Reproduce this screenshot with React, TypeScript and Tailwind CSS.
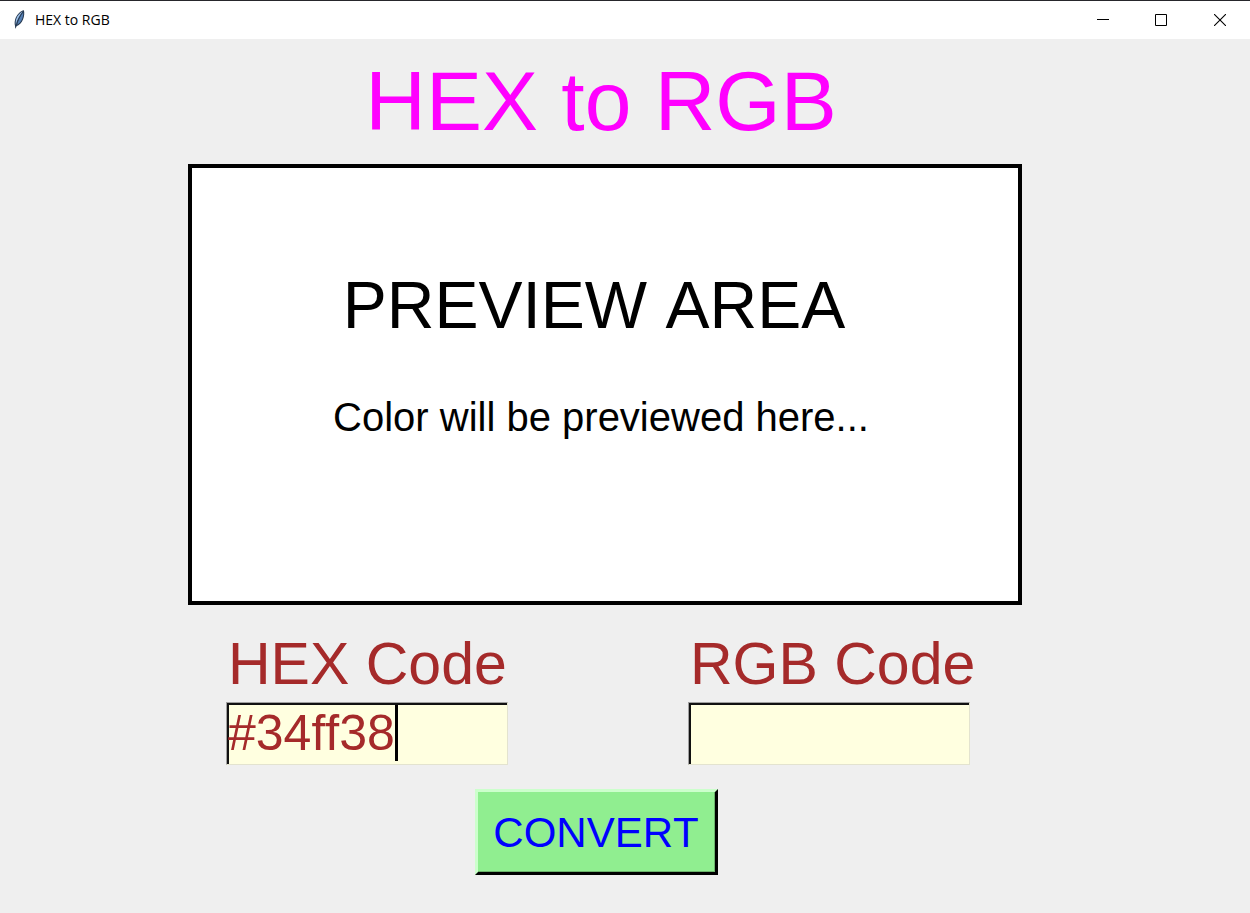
import { useState } from "react";

function FeatherIcon() {
  return (
    <svg viewBox="0 0 16 22" className="h-[22px] w-4" aria-hidden="true">
      <path d="M11.900 1.200C8.600 1.800 4.600 5.400 3.200 10.200c-.7 2.400-.7 4.800-.2 6.600l.3 3.200 1.100-2.700c2.700-.9 5.400-3.500 6.700-7 1.200-3.300 1.500-6.400.8-9.100z" fill="#26384f" />
      <path d="M10.800 2.300C7.700 3.900 4.900 7 4 10.800c-.4 1.900-.4 3.700-.1 4.900C5 11 7.600 6.200 10.800 2.300z" fill="#9dc0e8" />
      <path d="M11.200 3.200C8.700 6.800 6.200 11.200 5.100 15.800c2.100-1.200 4-3.200 5.100-6.100.8-2.300 1.200-4.500 1-6.500z" fill="#5580b5" />
      <path d="M10.800 3.200C7.800 7.200 5.200 12 3.700 18.500" fill="none" stroke="#2c4360" strokeWidth=".5" />
    </svg>
  );
}

function TitleBar() {
  return (
    <header className="flex h-[39px] items-center border-t border-[#26262b] bg-white">
      <div className="flex grow items-center gap-[7px] pl-3">
        <FeatherIcon />
        <span className="font-['Open_Sans',sans-serif] text-sm text-black">HEX to RGB</span>
      </div>
      <button type="button" aria-label="Minimize" className="flex h-full w-[58px] items-center justify-center">
        <svg viewBox="0 0 12 12" className="size-3"><path d="M0 5.500h12" stroke="#000" /></svg>
      </button>
      <button type="button" aria-label="Maximize" className="flex h-full w-[58px] items-center justify-center">
        <svg viewBox="0 0 12 12" className="size-3"><path d="M.5.5h11v11H.5z" fill="none" stroke="#000" /></svg>
      </button>
      <button type="button" aria-label="Close" className="flex h-full w-[60px] items-center justify-center">
        <svg viewBox="0 0 12 12" className="size-3"><path d="M0 0l12 12M12 0L0 12" stroke="#000" strokeWidth="1.100" /></svg>
      </button>
    </header>
  );
}

type FieldProps = {
  id: string;
  label: string;
  value: string;
  onChange?: (value: string) => void;
  caret?: boolean;
};

function Field({ id, label, value, onChange, caret }: FieldProps) {
  return (
    <div className="flex w-[282px] flex-col gap-1.5">
      <label htmlFor={id} className="pl-0.5 text-[59px] leading-16 whitespace-nowrap text-[#a52a2a]">
        {label}
      </label>
      <div className="relative">
        <input
          id={id}
          value={value}
          readOnly={!onChange}
          onChange={(e) => onChange?.(e.target.value)}
          className="block h-[63px] w-full border border-t-[#a0a0a0] border-r-[#e3e3cf] border-b-[#e3e3cf] border-l-[#a0a0a0] bg-[#ffffe0] pl-px text-[50px] text-[#a52a2a] caret-transparent shadow-[inset_2px_2px_0_#111] outline-none"
        />
        {caret && <span className="absolute top-[3px] left-[169px] h-[56px] w-[3px] bg-black" />}
      </div>
    </div>
  );
}

export default function App() {
  const [hex, setHex] = useState("#34ff38");
  const [rgb, setRgb] = useState("");
  const [color, setColor] = useState("#ffffff");

  const convert = () => {
    const match = /^#?([0-9a-f]{2})([0-9a-f]{2})([0-9a-f]{2})$/i.exec(hex.trim());
    if (!match) return;
    const parts = match.slice(1).map((p) => parseInt(p, 16));
    setRgb(parts.join(","));
    setColor(`rgb(${parts.join(",")})`);
  };

  return (
    <div className="min-h-screen bg-[#efefef] font-['Liberation_Sans',Arial,sans-serif] [font-kerning:none]">
      <TitleBar />
      <main className="flex flex-col pt-3.5 pr-[228px] pb-9 pl-[188px]">
        <h1 className="pr-2 text-center text-[84px] leading-24 whitespace-nowrap text-[#ff00ff]">HEX to RGB</h1>
        <section
          style={{ backgroundColor: color }}
          className="mt-[15px] border-4 border-black pt-[97px] pb-40 text-center whitespace-nowrap text-black"
        >
          <h2 className="pr-[22px] text-[66px] leading-20">PREVIEW AREA</h2>
          <p className="mt-12 pr-2 text-[40px] leading-12">Color will be previewed here...</p>
        </section>
        <div className="mt-[27px] flex justify-between pr-[52px] pl-[38px]">
          <Field id="hex" label="HEX Code" value={hex} onChange={setHex} caret />
          <Field id="rgb" label="RGB Code" value={rgb} />
        </div>
        <div className="mt-6 flex justify-center pr-[18px]">
          <button
            type="button"
            onClick={convert}
            className="h-[86px] w-[243px] border-3 border-t-[#ccffcc] border-r-black border-b-black border-l-[#ccffcc] bg-[#90ee90] text-[42px] text-[#0000ff] shadow-[inset_-1px_-1px_0_#6cb36c]"
          >
            CONVERT
          </button>
        </div>
      </main>
    </div>
  );
}
